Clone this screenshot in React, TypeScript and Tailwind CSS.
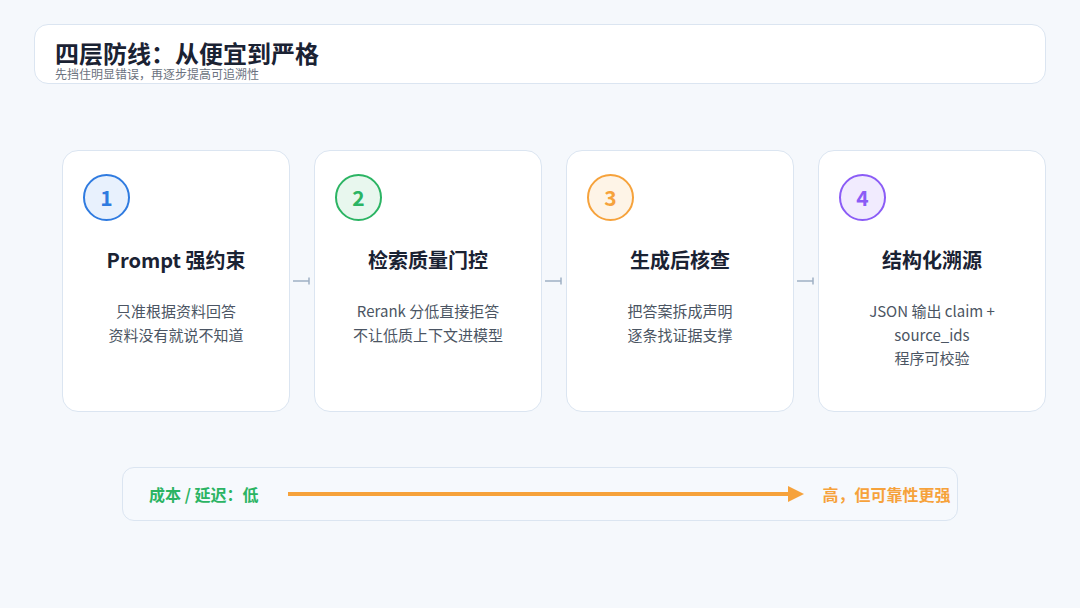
import React from "react";

const cards = [
  { n: "1", title: "Prompt 强约束", lines: ["只准根据资料回答", "资料没有就说不知道"], c: "border-[#2f7be0] text-[#2f7be0] bg-[#e8f1fd]" },
  { n: "2", title: "检索质量门控", lines: ["Rerank 分低直接拒答", "不让低质上下文进模型"], c: "border-[#2bb463] text-[#2bb463] bg-[#e8f7ee]" },
  { n: "3", title: "生成后核查", lines: ["把答案拆成声明", "逐条找证据支撑"], c: "border-[#f6a23b] text-[#f6a23b] bg-[#fef4e7]" },
  { n: "4", title: "结构化溯源", lines: ["JSON 输出 claim +", "source_ids", "程序可校验"], c: "border-[#8b5cf6] text-[#8b5cf6] bg-[#f1ebfe]" },
];

export default function App() {
  return (
    <div className="w-[1080px] h-[608px] bg-[#f5f8fc] overflow-hidden pt-6 px-[34px]" style={{ fontFamily: '"Noto Sans CJK SC", "Noto Sans", sans-serif' }}>
      <div className="h-[60px] bg-white border border-[#dbe5f1] rounded-[14px] pl-[20px] pt-[13px]">
        <div className="text-[24px] font-bold text-[#1a2233] leading-[30px]">四层防线：从便宜到严格</div>
        <div className="text-[12px] text-[#6b7280] leading-[13px] -mt-[1px]">先挡住明显错误，再逐步提高可追溯性</div>
      </div>
      <div className="flex items-center mt-[66px] pl-[28px]">
        {cards.map((k, i) => (
          <React.Fragment key={k.n}>
            {i > 0 && (
              <div className="w-[24px] flex justify-center">
                <svg width="18" height="8" viewBox="0 0 18 8"><path d="M0 4H16M16 0.5V7.5" stroke="#9fb0c4" strokeWidth="1.5" fill="none" /></svg>
              </div>
            )}
            <div className="w-[229px] h-[262px] bg-white border border-[#dbe5f1] rounded-[16px] px-5 pt-[23px] flex flex-col">
              <div className={`w-[47px] h-[47px] rounded-full border-2 flex items-center justify-center text-[21px] font-bold ${k.c}`}>{k.n}</div>
              <div className="mt-[24px] text-center text-[20px] font-bold text-[#1a2233] leading-[30px]">{k.title}</div>
              <div className="mt-[24px] text-center text-[15px] text-[#4b5563] leading-[23.5px]">
                {k.lines.map((l) => <div key={l}>{l}</div>)}
              </div>
            </div>
          </React.Fragment>
        ))}
      </div>
      <div className="ml-[88px] mt-[55px] w-[836px] h-[54px] border border-[#dbe5f1] rounded-[12px] bg-[#f6f9fd] flex items-center pl-[26px]">
        <span className="text-[#2bb463] text-[16px] font-bold">成本 / 延迟：低</span>
        <svg className="ml-[30px]" width="516" height="16" viewBox="0 0 516 16">
          <rect x="0" y="6" width="502" height="4" fill="#f6a23b" />
          <path d="M500 0L516 8L500 16Z" fill="#f6a23b" />
        </svg>
        <span className="ml-[18px] text-[#f6a23b] text-[16px] font-bold">高，但可靠性更强</span>
      </div>
    </div>
  );
}
